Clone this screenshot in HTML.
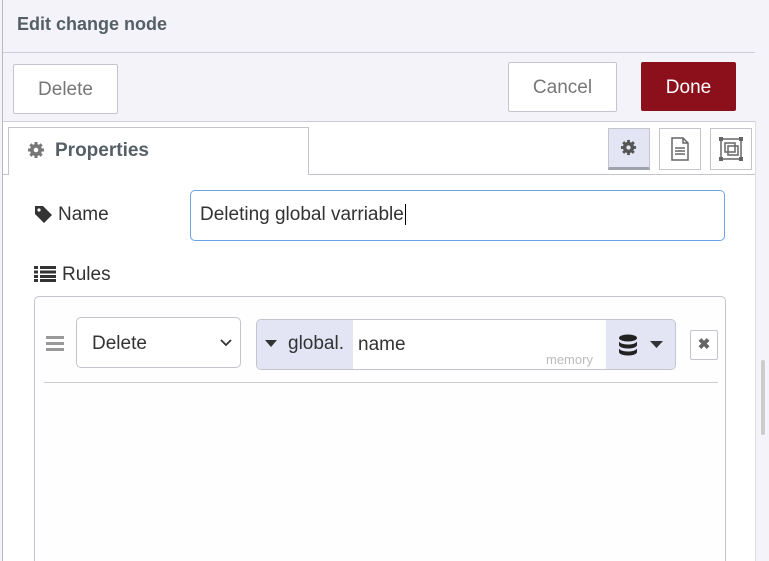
<!DOCTYPE html>
<html><head><style>
*{box-sizing:border-box}
html,body{margin:0;width:769px;height:561px;overflow:hidden}
body{background:#f3f3f9;font-family:"Liberation Sans",sans-serif;position:relative;color:#333}
.a{position:absolute}
.btn{position:absolute;border:1px solid #c4c4cc;background:#fff;color:#777;font-size:19px;display:flex;align-items:center;justify-content:center;border-radius:2px;padding-top:2px}
</style></head><body>
<div class="a" style="left:2px;top:0;width:1px;height:561px;background:#bbb"></div>
<div class="a" style="left:17px;top:14px;font-size:18px;font-weight:bold;color:#555f66">Edit change node</div>
<div class="a" style="left:3px;top:52px;width:752px;height:1px;background:#cdcdd8"></div>
<div class="btn" style="left:13px;top:64px;width:105px;height:50px">Delete</div>
<div class="btn" style="left:508px;top:62px;width:109px;height:50px">Cancel</div>
<div class="btn" style="left:641px;top:62px;width:95px;height:49px;background:#8c101c;border-color:#8c101c;color:#fff">Done</div>
<div class="a" style="left:3px;top:121px;width:752px;height:440px;background:#fff;border-top:1px solid #cdcdd8"></div>
<div class="a" style="left:755px;top:121px;width:1px;height:440px;background:#ddd"></div>
<div class="a" style="left:3px;top:174px;width:752px;height:1px;background:#c4c4cc"></div>
<div class="a" style="left:8px;top:127px;width:301px;height:48px;background:#fff;border:1px solid #c4c4cc;border-bottom:none"></div>
<svg class="a" style="left:27px;top:141px" width="18" height="18" viewBox="0 0 18 18"><g fill="#777"><circle cx="9" cy="9" r="6"/><rect x="7.5" y="1" width="3" height="16"/><rect x="1" y="7.5" width="16" height="3"/><rect x="7.5" y="1" width="3" height="16" transform="rotate(45 9 9)"/><rect x="7.5" y="1" width="3" height="16" transform="rotate(-45 9 9)"/></g><circle cx="9" cy="9" r="2.3" fill="#fff"/></svg>
<div class="a" style="left:55px;top:140px;font-size:19px;font-weight:bold;color:#555f66">Properties</div>
<div class="a" style="left:608px;top:128px;width:42px;height:42px;background:#e3e5f5;border:1px solid #c4c4cc;border-bottom:3px solid #a0a3ae"></div>
<svg class="a" style="left:620px;top:139px" width="17" height="17" viewBox="0 0 18 18"><g fill="#555"><circle cx="9" cy="9" r="6"/><rect x="7.5" y="1" width="3" height="16"/><rect x="1" y="7.5" width="16" height="3"/><rect x="7.5" y="1" width="3" height="16" transform="rotate(45 9 9)"/><rect x="7.5" y="1" width="3" height="16" transform="rotate(-45 9 9)"/></g><circle cx="9" cy="9" r="2.3" fill="#e3e5f5"/></svg>
<div class="a" style="left:659px;top:128px;width:42px;height:42px;border:1px solid #c4c4cc;background:#fff"></div>
<svg class="a" style="left:670px;top:137px" width="20" height="24" viewBox="0 0 20 24" fill="none" stroke="#666" stroke-width="1.5"><path d="M2 1h11l5 5v17H2z M13 1v5h5"/><path d="M5 11h10M5 14h10M5 17h10"/></svg>
<div class="a" style="left:710px;top:128px;width:42px;height:42px;border:1px solid #c4c4cc;background:#fff"></div>
<svg class="a" style="left:718px;top:136px" width="26" height="26" viewBox="0 0 26 26" fill="none" stroke="#666" stroke-width="1.5"><rect x="3" y="3" width="20" height="20"/><rect x="7" y="7" width="10" height="9"/><rect x="10" y="10" width="10" height="9"/><g fill="#666" stroke="none"><rect x="1" y="1" width="4" height="4"/><rect x="21" y="1" width="4" height="4"/><rect x="1" y="21" width="4" height="4"/><rect x="21" y="21" width="4" height="4"/></g></svg>
<svg class="a" style="left:34px;top:205px" width="19" height="19" viewBox="0 0 19 19"><path d="M1 1h8l9 9-8 8-9-9z" fill="#333"/><circle cx="5" cy="5" r="1.6" fill="#fff"/></svg>
<div class="a" style="left:58px;top:204px;font-size:19px">Name</div>
<div class="a" style="left:190px;top:190px;width:535px;height:51px;border:1px solid #6ba3e6;border-radius:5px;background:#fff"></div>
<div class="a" style="left:200px;top:204px;font-size:19px">Deleting global varriable<span style="border-left:1.5px solid #000;margin-left:1px"></span></div>
<svg class="a" style="left:34px;top:265px" width="22" height="17" viewBox="0 0 22 17" fill="#333"><rect x="0" y="1" width="4" height="3"/><rect x="6" y="1" width="16" height="3"/><rect x="0" y="5.5" width="4" height="3"/><rect x="6" y="5.5" width="16" height="3"/><rect x="0" y="10" width="4" height="3"/><rect x="6" y="10" width="16" height="3"/><rect x="0" y="14" width="4" height="3"/><rect x="6" y="14" width="16" height="3"/></svg>
<div class="a" style="left:62px;top:264px;font-size:19px">Rules</div>
<div class="a" style="left:34px;top:296px;width:692px;height:265px;border:1px solid #c4c4cc;border-bottom:none;border-radius:5px 5px 0 0;background:#fefefe"></div>
<div class="a" style="left:46px;top:336px;width:18px;height:3px;background:#999;box-shadow:0 6px 0 #999,0 12px 0 #999"></div>
<div class="a" style="left:76px;top:317px;width:165px;height:51px;border:1px solid #c4c4cc;border-radius:5px;background:#fff"></div>
<div class="a" style="left:92px;top:333px;font-size:19px">Delete</div>
<svg class="a" style="left:219px;top:338px" width="14" height="10" viewBox="0 0 14 10" fill="none" stroke="#333" stroke-width="1.8"><path d="M2 2l5 5 5-5"/></svg>
<div class="a" style="left:256px;top:319px;width:420px;height:51px;border:1px solid #c4c4cc;border-radius:5px;background:#fff;overflow:hidden">
<div class="a" style="left:0;top:0;width:96px;height:49px;background:#e3e5f5"></div>
<div class="a" style="left:349px;top:0;width:70px;height:49px;background:#e3e5f5"></div>
</div>
<svg class="a" style="left:265px;top:340px" width="12" height="8"><path d="M0 0h12L6 7z" fill="#333"/></svg>
<div class="a" style="left:288px;top:333px;font-size:19px">global.</div>
<div class="a" style="left:358px;top:334px;font-size:19px">name</div>
<div class="a" style="left:546px;top:352px;font-size:13px;color:#bbb">memory</div>
<svg class="a" style="left:618px;top:334px" width="20" height="23" viewBox="0 0 20 23" fill="#222"><ellipse cx="10" cy="4" rx="9" ry="3.5"/><path d="M1 7c0 2 4 3.5 9 3.5s9-1.5 9-3.5v4c0 2-4 3.5-9 3.5S1 13 1 11z"/><path d="M1 14c0 2 4 3.5 9 3.5s9-1.5 9-3.5v4c0 2-4 3.5-9 3.5S1 20 1 18z"/></svg>
<svg class="a" style="left:650px;top:341px" width="13" height="8"><path d="M0 0h13L6.5 7z" fill="#333"/></svg>
<div class="a" style="left:690px;top:330px;width:28px;height:30px;border:1px solid #c4c4cc;border-radius:2px;background:#fff;font-size:15px;font-weight:bold;color:#666;text-align:center;line-height:28px">✖</div>
<div class="a" style="left:44px;top:382px;width:674px;height:1px;background:#ccc"></div>
<div class="a" style="left:761px;top:360px;width:4px;height:75px;background:#ccc;border-radius:2px"></div>
</body></html>
